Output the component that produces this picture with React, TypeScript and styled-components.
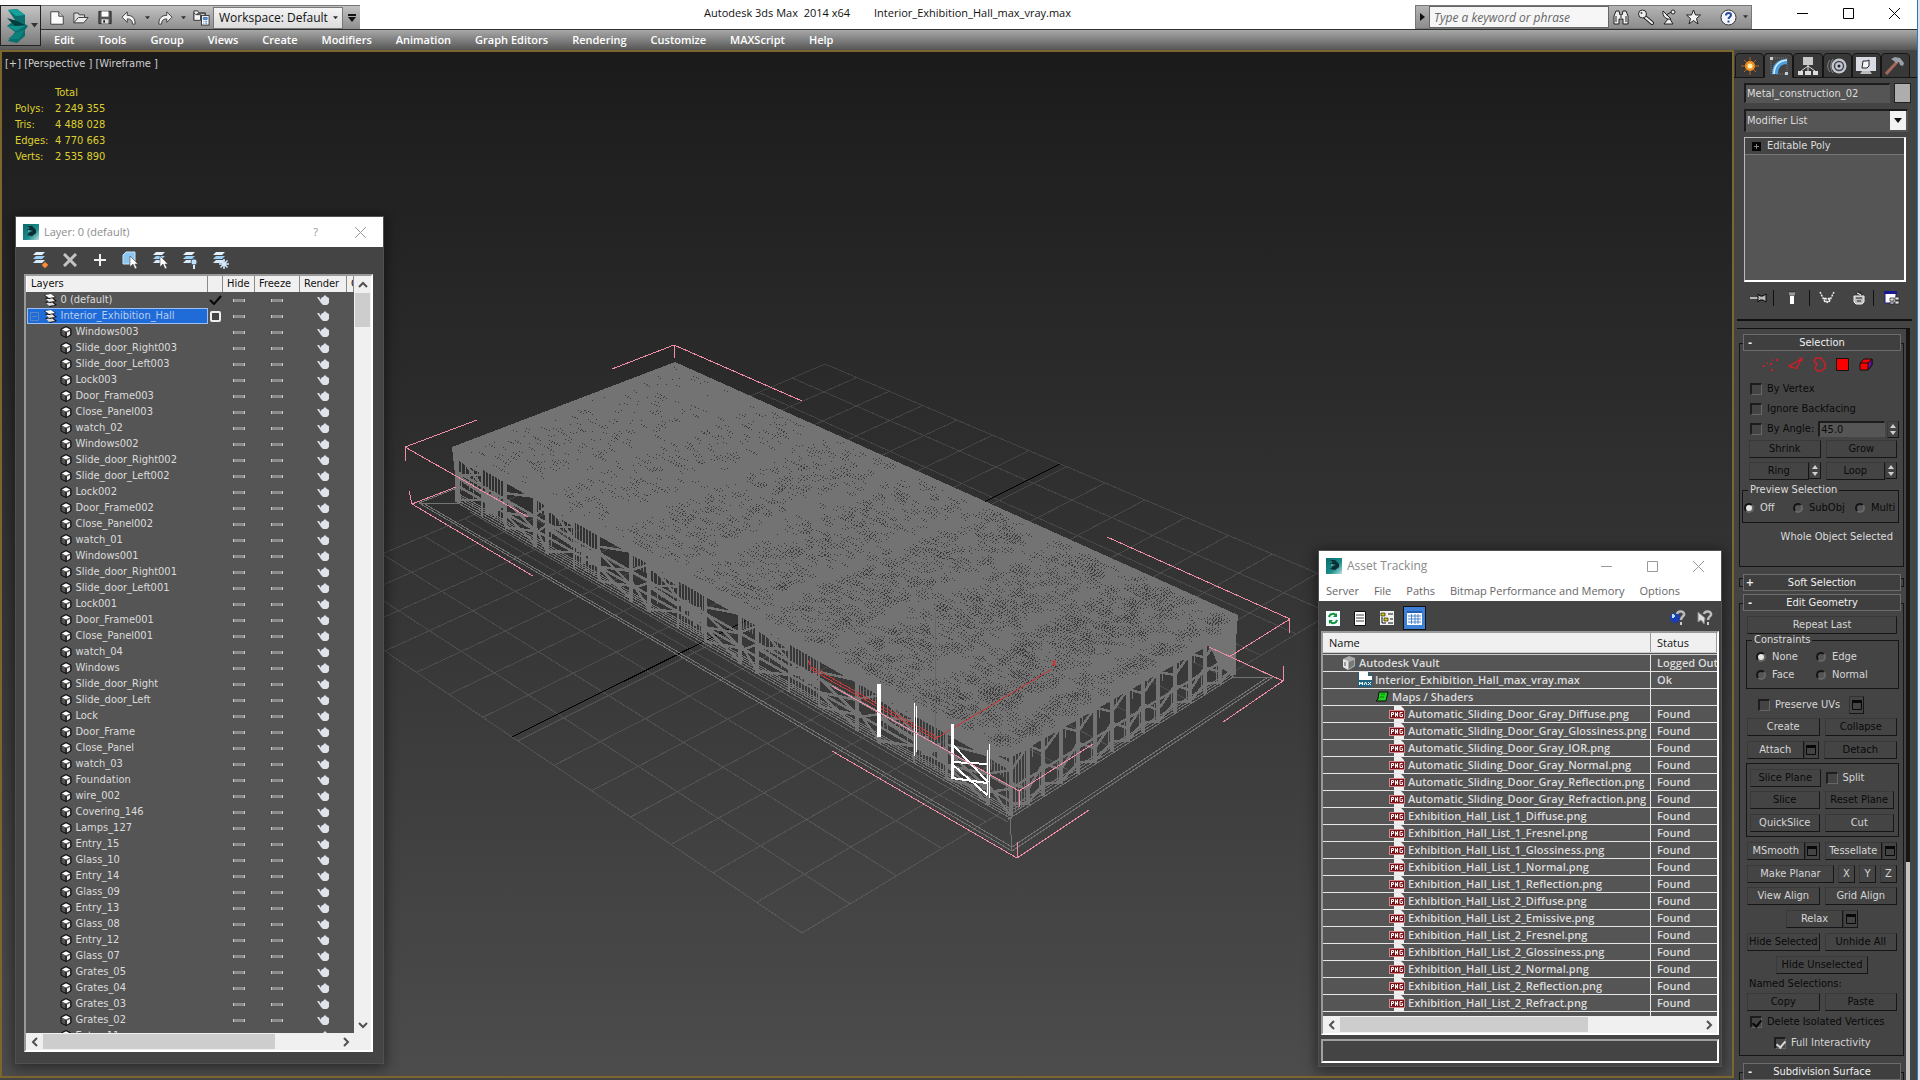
import React from "react";
import styled, { createGlobalStyle, css } from "styled-components";

const TAHOMA = `"DejaVu Sans Condensed", Roboto, "DejaVu Sans", sans-serif`;
const SEGOE = `"Open Sans", "Noto Sans", sans-serif`;

const Global = createGlobalStyle`
  * { box-sizing: border-box; }
  html, body, #root { height: 100%; }
  body { margin: 0; overflow: hidden; background: #444; font: 11px/14px ${TAHOMA}; color: #dcdcdc; }
  button, input, select { font: inherit; color: inherit; margin: 0; padding: 0; }
  button { border: 0; background: none; cursor: default; }
  svg { display: block; flex: none; }
`;

/* ---------- application frame ---------- */

const Frame = styled.div`
  display: flex;
  flex-direction: column;
  height: 100vh;
  border-right: 2px solid #dfe5ea;
  overflow: hidden;
`;
const Inner = styled.div`
  display: flex;
  flex-direction: column;
  flex: 1;
  min-height: 0;
  border-right: 1px solid #2f78b7;
`;
const Top = styled.header`
  display: flex;
  position: relative;
  background: #fff;
  height: 50px;
`;
const AppButton = styled.button`
  position: absolute;
  left: 0;
  top: 5px;
  width: 41px;
  height: 41px;
  display: flex;
  align-items: center;
  gap: 3px;
  padding-left: 4px;
  border: 1px solid #222;
  background: linear-gradient(#c4c4c4, #7c7c7c);
  z-index: 1;
`;
const Bars = styled.div`
  flex: 1;
  display: flex;
  flex-direction: column;
`;
const TitleBar = styled.div`
  height: 29px;
  display: flex;
  justify-content: space-between;
  padding-left: 40px;
`;
const QuickBar = styled.div`
  display: flex;
  align-items: center;
  margin-top: 5px;
  height: 24px;
  padding-left: 5px;
  background: linear-gradient(#c2c2c2, #8e8e8e);
  border-top: 1px solid #777;
`;
const QuickButton = styled.button<{ $w?: number }>`
  width: ${(p) => p.$w ?? 24}px;
  height: 22px;
  display: flex;
  align-items: center;
  justify-content: center;
`;
const SelectWrap = styled.label`
  display: flex;
  align-items: center;
  position: relative;
`;
const WorkspaceSelect = styled.select`
  appearance: none;
  width: 130px;
  height: 22px;
  padding-left: 5px;
  border: 1px solid #777;
  border-radius: 0;
  background: linear-gradient(#f4f4f4, #dcdcdc);
  color: #111;
  font: 12px/18px ${SEGOE};
`;
const SelectArrow = styled.span<{ $right: number }>`
  position: absolute;
  right: ${(p) => p.$right}px;
  pointer-events: none;
`;
const TitleText = styled.div`
  display: flex;
  gap: 24px;
  color: #111;
  font: 11px/26px ${SEGOE};
  white-space: pre;
`;
const TitleRight = styled.div`
  display: flex;
`;
const SearchBar = styled.div`
  display: flex;
  align-items: center;
  margin-top: 5px;
  height: 24px;
  width: 337px;
  background: linear-gradient(#b4b4b4, #8c8c8c);
  border: 1px solid #777;
`;
const SearchInput = styled.input`
  flex: 1;
  min-width: 0;
  height: 22px;
  padding-left: 4px;
  border: 1px solid #666;
  background: #f6f6f6;
  font: italic 12px/18px ${SEGOE};
  &::placeholder { color: #666; opacity: 1; }
`;
const WinButtons = styled.div<{ $w: number; $gray?: boolean }>`
  display: flex;
  height: 26px;
  color: ${(p) => (p.$gray ? "#999" : "#000")};
  button { width: ${(p) => p.$w}px; display: flex; align-items: center; justify-content: center; }
`;
const MenuBar = styled.nav`
  height: 21px;
  display: flex;
  align-items: center;
  gap: 24px;
  padding-left: 54px;
  border-top: 1px solid #2c322c;
  background: linear-gradient(#a8a8a8, #565656);
  button { font: 600 11px/16px ${SEGOE}; color: #fff; white-space: nowrap; }
`;
const Workspace = styled.div`
  flex: 1;
  display: flex;
  min-height: 0;
  background: #444;
`;

/* ---------- viewport ---------- */

const Viewport = styled.main`
  flex: 1;
  min-width: 0;
  position: relative;
  margin-bottom: 2px;
  border: 2px solid #7c6630;
  background: linear-gradient(#1b1b1b, #4c4c4c);
  overflow: hidden;
`;
const Scene = styled.svg`
  position: absolute;
  inset: 0;
  width: 100%;
  height: 100%;
`;
const ViewLabels = styled.div`
  position: relative;
  padding: 5px 3px 4px;
  white-space: pre;
  color: #cfcfcf;
`;
const Stats = styled.table`
  position: relative;
  margin: 10px 0 0 13px;
  border-collapse: collapse;
  color: #ddd02e;
  th, td { padding: 0; height: 16px; text-align: left; font-weight: normal; }
  th:first-child { width: 40px; }
`;

/* ---------- dialogs ---------- */

const Dialog = styled.section<{ $x: number; $y: number; $w: number; $h: number }>`
  position: absolute;
  left: ${(p) => p.$x}px;
  top: ${(p) => p.$y}px;
  width: ${(p) => p.$w}px;
  height: ${(p) => p.$h}px;
  display: flex;
  flex-direction: column;
  background: #444;
  border: 1px solid #505050;
  box-shadow: 0 2px 12px 2px rgba(0, 0, 0, 0.45);
`;
const DialogTitle = styled.div<{ $size: number }>`
  display: flex;
  align-items: center;
  height: 30px;
  flex: none;
  padding-left: 7px;
  gap: 5px;
  background: #fff;
  color: #8c8c8c;
  font: ${(p) => p.$size}px/18px ${SEGOE};
  > span { flex: 1; }
`;
const DialogMenu = styled.nav`
  display: flex;
  flex: none;
  gap: 15px;
  height: 20px;
  padding-left: 7px;
  background: #fff;
  color: #666;
  font: 11px/18px ${SEGOE};
  button { white-space: nowrap; }
`;
const LayerTools = styled.div`
  display: flex;
  align-items: center;
  height: 26px;
  flex: none;
  padding-left: 9px;
  button { width: 30px; display: flex; justify-content: center; }
`;
const Sunken = styled.div`
  display: flex;
  flex-direction: column;
  flex: 1;
  min-height: 0;
  border: 2px solid #999;
  border-right-color: #fff;
  border-bottom-color: #fff;
  background: #555;
`;
const LayerList = styled(Sunken)`
  margin: 1px 10px 11px 8px;
`;
const ListBody = styled.div`
  flex: 1;
  min-height: 0;
  display: flex;
`;
const Clip = styled.div`
  flex: 1;
  min-width: 0;
  overflow: hidden;
`;
const LayerTable = styled.table`
  width: 100%;
  table-layout: fixed;
  border-collapse: collapse;
  th {
    height: 16px;
    padding: 0 0 0 4px;
    border-right: 1px solid #888;
    border-left: 1px solid #fff;
    background: #f0f0f0;
    color: #111;
    font-weight: normal;
    text-align: left;
    overflow: hidden;
    white-space: nowrap;
  }
  td { height: 16px; padding: 0; line-height: 14px; }
  td > svg { margin: 0 auto; }
`;
const NameCell = styled.div<{ $level: number; $on?: boolean }>`
  display: flex;
  align-items: center;
  gap: 4px;
  height: 16px;
  padding-left: ${(p) => (p.$level ? 33 : 17)}px;
  white-space: nowrap;
  ${(p) =>
    p.$on &&
    css`
      padding-left: 2px;
      border: 1px solid #9cc0f4;
      background: #1f6bd8;
      color: #b8cdf0;
      svg:first-child { margin-right: 1px; }
    `}
`;
const ScrollColumn = styled.div`
  width: 17px;
  display: flex;
  flex-direction: column;
  background: #f0f0f0;
`;
const ScrollRow = styled.div`
  height: 17px;
  flex: none;
  display: flex;
  background: #f0f0f0;
`;
const ScrollArrow = styled.button`
  width: 17px;
  height: 17px;
  flex: none;
  display: flex;
  align-items: center;
  justify-content: center;
`;
const Track = styled.div`
  flex: 1;
  display: flex;
`;
const ThumbV = styled.div<{ $h: number }>`
  width: 15px;
  margin: 0 1px;
  height: ${(p) => p.$h}px;
  background: #cdcdcd;
`;
const ThumbH = styled.div<{ $pct: number }>`
  width: ${(p) => p.$pct}%;
  margin: 1px 0;
  background: #cdcdcd;
`;
const AssetTools = styled.div`
  display: flex;
  align-items: center;
  height: 30px;
  padding: 4px 3px 0 0;
  flex: none;
`;
const AssetTool = styled.button<{ $on?: boolean }>`
  width: 27px;
  height: 24px;
  display: flex;
  align-items: center;
  justify-content: center;
  ${(p) =>
    p.$on &&
    css`
      width: 23px;
      margin-left: 3px;
      border: 1px solid #111;
      background: #3e7fd8;
    `}
`;
const Spacer = styled.div`
  flex: 1;
`;
const AssetList = styled(Sunken)`
  margin: 0 2px 4px;
`;
const AssetTable = styled.table`
  width: 100%;
  height: 100%;
  table-layout: fixed;
  border-collapse: collapse;
  font: 600 11px/15px ${SEGOE};
  th {
    height: 20px;
    padding: 0 6px;
    background: #f0f0f0;
    color: #111;
    text-align: left;
    font-weight: normal;
    border-bottom: 3px double #ccc;
    border-right: 1px solid #999;
  }
  td {
    height: 17px;
    padding: 0;
    border-bottom: 1px solid #e6e6e6;
    overflow: hidden;
    white-space: nowrap;
  }
  td + td { border-left: 1px solid #e6e6e6; padding-left: 6px; }
  tr:last-child td { border-bottom: 0; height: auto; }
`;
const AssetName = styled.div<{ $pad: number }>`
  display: flex;
  align-items: center;
  gap: 3px;
  height: 16px;
  padding-left: ${(p) => p.$pad}px;
`;
const StatusBox = styled.div`
  flex: none;
  height: 24px;
  margin: 0 2px 3px;
  border: 2px solid #a0a0a0;
  border-right-color: #fff;
  border-bottom-color: #fff;
`;

/* ---------- command panel ---------- */

const Panel = styled.aside`
  width: 183px;
  flex: none;
  display: flex;
  flex-direction: column;
  padding-top: 3px;
  background: #444;
`;
const Tabs = styled.div`
  display: flex;
  flex: none;
  height: 25px;
  padding: 0 7px 0 1px;
  border-bottom: 1px solid #111;
`;
const Tab = styled.button<{ $on?: boolean }>`
  flex: 1;
  height: 25px;
  display: flex;
  align-items: center;
  justify-content: center;
  border: 1px solid #151515;
  border-radius: 4px 4px 0 0;
  background: ${(p) => (p.$on ? "#444" : "#383838")};
  border-bottom-color: ${(p) => (p.$on ? "#444" : "#151515")};
`;
const Controls = styled.div`
  flex: none;
  display: flex;
  flex-direction: column;
  padding: 5px 6px 0 10px;
`;
const NameRow = styled.div`
  display: flex;
  gap: 4px;
  height: 20px;
`;
const sunkenField = css`
  border: 2px solid #1c1c1c;
  border-right: 1px solid #555;
  border-bottom: 1px solid #555;
  border-radius: 0;
  background: #555;
  color: #dcdcdc;
`;
const NameInput = styled.input`
  ${sunkenField}
  flex: 1;
  min-width: 0;
  padding-left: 1px;
`;
const Swatch = styled.button`
  width: 17px;
  background: #adadad;
  border: 1px solid #222;
`;
const ModifierWrap = styled(SelectWrap)`
  margin: 6px 3px 5px 0;
`;
const ModifierSelect = styled.select`
  ${sunkenField}
  appearance: none;
  width: 100%;
  height: 23px;
  padding-left: 1px;
`;
const DropBox = styled(SelectArrow)`
  width: 16px;
  height: 19px;
  display: flex;
  align-items: center;
  justify-content: center;
  background: #f2f2f2;
`;
const Stack = styled.div`
  height: 145px;
  margin-right: 5px;
  border: 1px solid #bbb;
  border-right: 2px solid #fff;
  border-bottom: 2px solid #fff;
  background: #555;
`;
const StackItem = styled.div`
  display: flex;
  align-items: center;
  gap: 6px;
  height: 17px;
  padding-left: 7px;
  background: #444;
  border-bottom: 1px solid #777;
`;
const StackTools = styled.div`
  display: grid;
  grid-template-columns: 29px 1px 35px 1px 34px 29px 1px 36px;
  align-items: center;
  justify-items: center;
  height: 31px;
  i { width: 1px; height: 16px; background: #111; }
`;
const Rule = styled.hr`
  flex: none;
  margin: 6px 5px 7px 3px;
  width: auto;
  border: 0;
  height: 2px;
  background: #111;
`;
const RollArea = styled.div`
  flex: 1;
  min-height: 0;
  display: flex;
  gap: 2px;
  margin: 0 7px 0 3px;
  padding-left: 2px;
  border-top: 1px solid #111;
  overflow: hidden;
`;
const Rolls = styled.div`
  flex: 1;
  min-width: 0;
  padding-top: 5px;
`;
const Rail = styled.div`
  width: 4px;
  background: linear-gradient(#151515 0 533px, #c4c4c4 533px);
`;
const RollHead = styled.button`
  position: relative;
  display: grid;
  grid-template-columns: 12px 1fr 12px;
  width: calc(100% - 7px);
  height: 17px;
  margin-left: 4px;
  align-items: center;
  border: 1px solid #6c6c6c;
  background: #3f3f3f;
  color: #f0f0f0;
`;
const RollBody = styled.div<{ $h?: number }>`
  display: flex;
  flex-direction: column;
  margin: -8px 0 7px;
  padding: 12px 6px 5px 7px;
  border: 1px solid #151515;
  height: ${(p) => (p.$h ? p.$h + "px" : "auto")};
`;
const RollStub = styled.div`
  height: 9px;
  margin: -13px 0 7px;
  border: 1px solid #151515;
`;
const Line = styled.div<{ $gap?: number; $top?: number; $h?: number; $left?: number; $center?: boolean }>`
  display: flex;
  flex: none;
  align-items: center;
  height: ${(p) => p.$h ?? 18}px;
  gap: ${(p) => p.$gap ?? 5}px;
  margin-top: ${(p) => p.$top ?? 5}px;
  padding-left: ${(p) => p.$left ?? 0}px;
  justify-content: ${(p) => (p.$center ? "center" : "flex-start")};
`;
const Btn = styled.button<{ $w?: number }>`
  flex: ${(p) => (p.$w ? `0 0 ${p.$w}px` : "1 1 0")};
  min-width: 0;
  height: 18px;
  line-height: 14px;
  white-space: nowrap;
  text-align: center;
  border: 1px solid #393939;
  border-right-color: #161616;
  border-bottom-color: #161616;
  background: #444;
  color: #d6d6d6;
  &:disabled { color: #0a0a0a; }
`;
const Pair = styled.div<{ $w?: number }>`
  display: flex;
  flex: ${(p) => (p.$w ? `0 0 ${p.$w}px` : "1 1 0")};
  min-width: 0;
`;
const Square = styled.button`
  flex: 0 0 15px;
  height: 18px;
  display: flex;
  align-items: center;
  justify-content: center;
  border: 1px solid #333;
  border-right-color: #161616;
  border-bottom-color: #161616;
`;
const Check = styled.label<{ $off?: boolean }>`
  display: flex;
  align-items: center;
  gap: 5px;
  white-space: nowrap;
  color: ${(p) => (p.$off ? "#0a0a0a" : "#d6d6d6")};
  input {
    appearance: none;
    display: grid;
    place-items: center;
    width: 12px;
    height: 12px;
    border: 2px solid #1d1d1d;
    border-right: 1px solid #666;
    border-bottom: 1px solid #666;
  }
  input:checked::after {
    content: "";
    width: 4px;
    height: 7px;
    border: solid currentColor;
    border-width: 0 2px 2px 0;
    transform: rotate(40deg);
  }
`;
const Radio = styled.label<{ $off?: boolean }>`
  display: flex;
  align-items: center;
  gap: 6px;
  white-space: nowrap;
  color: ${(p) => (p.$off ? "#0a0a0a" : "#d6d6d6")};
  input {
    appearance: none;
    width: 10px;
    height: 10px;
    border-radius: 50%;
    border: 2px solid;
    border-color: #151515 #666 #666 #151515;
    background: #555;
  }
  input:checked { background: #e6e6e6; }
`;
const AngleInput = styled.input`
  ${sunkenField}
  width: 67px;
  height: 16px;
  padding-left: 1px;
  color: #0a0a0a;
`;
const Spin = styled.button`
  flex: 0 0 12px;
  height: 17px;
  display: flex;
  align-items: center;
  justify-content: center;
  border: 1px solid #393939;
  border-right-color: #161616;
  border-bottom-color: #161616;
`;
const Group = styled.fieldset<{ $h: number }>`
  flex: none;
  min-width: 0;
  height: ${(p) => p.$h}px;
  margin: 4px -2px 0 -5px;
  padding: 3px 0 0 1px;
  border: 1px solid #151515;
  legend { padding: 0 2px; margin-left: 4px; line-height: 12px; }
`;
const Constraints = styled(Group)`
  margin: 0 -2px 0 -1px;
  display: grid;
  grid-template-columns: 60px 1fr;
  grid-auto-rows: 18px;
  padding-top: 2px;
  padding-left: 9px;
  legend { margin-left: -4px; }
`;
const Previews = styled.div`
  display: grid;
  grid-template-columns: 49px 62px 1fr;
  height: 18px;
`;
const Box = styled.div`
  flex: none;
  margin: 4px -2px 0 -1px;
  padding: 0 4px 4px 3px;
  border: 1px solid #151515;
`;
const Note = styled.p`
  margin: 7px 0 0;
  padding-right: 4px;
  text-align: right;
`;
const Dim = styled.span`
  color: #0a0a0a;
`;

/* ---------- icons ---------- */

const Chevron = ({ d }: { d: "up" | "down" | "left" | "right" }) => {
  const p = { up: "M1 7l4-4 4 4", down: "M1 3l4 4 4-4", left: "M7 1L3 5l4 4", right: "M3 1l4 4-4 4" }[d];
  return (
    <svg width="10" height="10" viewBox="0 0 10 10">
      <path d={p} fill="none" stroke="#505050" strokeWidth="2" />
    </svg>
  );
};
const Tri = ({ s = 6, c = "#111" }: { s?: number; c?: string }) => (
  <svg width={s} height={s / 2 + 1} viewBox="0 0 8 5"><path d="M0 0h8L4 5z" fill={c} /></svg>
);
const MaxLogo = () => (
  <svg width="23" height="34" viewBox="0 0 23 34">
    <path d="M3 1l9-1 8 6v9l3 2-3 4v6l-8 7-9-2 7-9-8-6 8-6z" fill="#0b6f6e" />
    <path d="M3 1l9-1 8 6-9 1z" fill="#17a09b" />
    <path d="M2 9l10 3 8 4-10 1z" fill="#043d3f" />
    <path d="M2 17l8 0 10 0-9 5z" fill="#12918c" />
    <path d="M3 30l9-7 8-2-6 9z" fill="#0d7f7c" />
  </svg>
);
const SmallLogo = () => (
  <svg width="16" height="16" viewBox="0 0 16 16">
    <defs><linearGradient id="lg" x1="0" y1="0" x2="1" y2="1"><stop offset="0" stopColor="#0b6a6c" /><stop offset=".6" stopColor="#1d8d8c" /><stop offset="1" stopColor="#bfe3e2" /></linearGradient></defs>
    <rect width="16" height="16" fill="url(#lg)" />
    <path d="M4 2l5 0 4 4v3l-4 3-5-1 3-3-3-2 3-2z" fill="#0a2c33" />
    <path d="M5 6l5 1-5 1z" fill="#4fc0b8" />
  </svg>
);
const Doc = () => (
  <svg width="16" height="16" viewBox="0 0 18 16"><path d="M2 1h9l5 5v9H2z" fill="#fafafa" stroke="#333" /><path d="M11 1v5h5" fill="#ccc" stroke="#333" /></svg>
);
const Folder = () => (
  <svg width="16" height="15" viewBox="0 0 18 16"><path d="M1 14V3h5l1 2h6v3" fill="#ddd" stroke="#333" /><path d="M1 14l5-6h11l-5 6z" fill="#eee" stroke="#333" /></svg>
);
const Save = () => (
  <svg width="14" height="15" viewBox="0 0 16 16"><path d="M1 1h14v14H1z" fill="#555" stroke="#222" /><path d="M4 1h8v6H4z" fill="#fff" /><path d="M4 10h8v5H4z" fill="#ddd" /><path d="M6 11h2v3H6z" fill="#222" /></svg>
);
const Undo = ({ flip }: { flip?: boolean }) => (
  <svg width="16" height="14" viewBox="0 0 18 16"><path transform={flip ? "matrix(-1 0 0 1 18 0)" : undefined} d="M1 7l6-6v4c6 0 9 3 9 10h-3c0-4-2-6-6-6v4z" fill="#f3f3f3" stroke="#333" /></svg>
);
const Project = () => (
  <svg width="17" height="17" viewBox="0 0 18 18"><path d="M1 12V2h4l1 2h7v3M4 5h9v4" fill="#eee" stroke="#333" /><path d="M1 4v8h7V6H3z" fill="#f5f5f5" stroke="#333" /><rect x="9" y="7" width="8" height="10" fill="#fff" stroke="#333" /><path d="M11 9h4v2h-4zM11 13h1M13 13h2M11 15h1M13 15h2" stroke="#2d6cb5" fill="#6ea8e6" /></svg>
);
const Binoculars = () => (
  <svg width="16" height="16" viewBox="0 0 16 16"><path d="M1 15V7l2-5h3l1 4h2l1-4h3l2 5v8h-5v-5H6v5z" fill="#eee" stroke="#222" /><path d="M3 7v6M13 7v6M7 8h2" stroke="#222" /></svg>
);
const Key = () => (
  <svg width="17" height="16" viewBox="0 0 17 16"><path d="M8 8l7 6" stroke="#222" strokeWidth="4" strokeLinecap="round" /><path d="M8 8l7 6" stroke="#eee" strokeWidth="2" strokeLinecap="round" /><circle cx="5.500" cy="5" r="4" fill="#eee" stroke="#222" /><circle cx="4.500" cy="4" r="1" fill="#444" /></svg>
);
const Dish = () => (
  <svg width="16" height="16" viewBox="0 0 16 16"><path d="M2 2c-1 5 3 9 8 8zM7 10l-4 5h9l-3-5" fill="#eee" stroke="#222" /><path d="M5 6l7-4" stroke="#222" /><circle cx="12" cy="3" r="2" fill="#eee" stroke="#222" /></svg>
);
const Star = () => (
  <svg width="17" height="16" viewBox="0 0 17 16"><path d="M8.500 1l2 5h5l-4 3.500 1.500 5.500-4.500-3.500L4 15l1.500-5.500-4-3.500h5z" fill="#f4f4f4" stroke="#222" /></svg>
);
const Help = () => (
  <svg width="17" height="17" viewBox="0 0 17 17"><circle cx="8.500" cy="8.500" r="7.500" fill="#f4f6fb" stroke="#333" /><path d="M6 6.500c0-3.500 5-3 5-.5 0 2-2.500 2-2.500 4" fill="none" stroke="#234a9c" strokeWidth="2" /><path d="M7.500 11.500h2v2h-2z" fill="#234a9c" /></svg>
);
const Min = () => <svg width="11" height="11" viewBox="0 0 11 11"><path d="M0 5.500h11" stroke="currentColor" /></svg>;
const Max = () => <svg width="11" height="11" viewBox="0 0 11 11"><path d="M.5.5h10v10H.5z" fill="none" stroke="currentColor" /></svg>;
const Close = () => <svg width="11" height="11" viewBox="0 0 11 11"><path d="M0 0l11 11M11 0L0 11" stroke="currentColor" /></svg>;

const Layers = () => (
  <svg width="13" height="13" viewBox="0 0 13 13">
    <path d="M1 8l7-1 5 4-7 2z" fill="#0a0a0a" /><path d="M2 9l6-1 3 3-6 1z" fill="#d8d8d8" />
    <path d="M1 4l7-1 5 4-7 2z" fill="#0a0a0a" /><path d="M2 5l6-1 3 3-6 1z" fill="#e8e8e8" />
    <path d="M0 1l7-1 5 3-7 2z" fill="#0a0a0a" /><path d="M1 1l6-1 4 3-6 1z" fill="#fff" />
  </svg>
);
const LayerTool = ({ k }: { k: "new" | "box" | "pick" | "light" | "freeze" }) => (
  <svg width="18" height="18" viewBox="0 0 18 18">
    {k === "box" ? (
      <path d="M2 4l3-3h9v9l-2 3H2z" fill="#8cc6f0" stroke="#c8e6fc" />
    ) : (
      <g fill="#9ccdf3"><path d="M5 1h9l-3 3H2z" fill="#e2f2ff" /><path d="M5 5h9l-3 3H2z" /><path d="M5 9h9l-3 3H2z" fill="#d5eafc" /></g>
    )}
    {k === "new" && <g><circle cx="14" cy="14" r="2.500" fill="#f06a1d" /><path d="M14 11v6M11 14h6" stroke="#f9a24c" /></g>}
    {(k === "box" || k === "pick") && <path d="M9 5v11l3-3 2 5 2-1-2-4h3z" fill="#fff" stroke="#444" strokeWidth=".6" />}
    {k === "light" && <g><circle cx="13" cy="11" r="3" fill="#bfe0fa" stroke="#567" /><path d="M12 14h2v4h-2z" fill="#d8e8f8" /></g>}
    {k === "freeze" && <path d="M13 8v10M8 13h10M9.500 9.500l7 7M16.500 9.500l-7 7" stroke="#d2eaff" strokeWidth="1.500" />}
  </svg>
);
const Cube = () => (
  <svg width="12" height="12" viewBox="0 0 12 12"><path d="M6 .5l5 2.500v6l-5 2.500-5-2.500V3z" fill="#555" stroke="#0a0a0a" /><path d="M2 3.500L6 1.500l4 2-4 2z" fill="#fff" /><path d="M7 6.500l3-1.500v3.500L7 10.500z" fill="#eee" /><path d="M6 6v5" stroke="#0a0a0a" /></svg>
);
const Dash = () => <svg width="12" height="4" viewBox="0 0 12 4"><path d="M0 1h12v3H0z" fill="#8c8c8c" /><path d="M0 1h1v3H0zM11 1h1v3h-1z" fill="#ccc" /></svg>;
const Teapot = () => <svg width="13" height="10" viewBox="0 0 13 10"><path d="M0 2h2l2 3V3l2-1 2-2 2 2 2 1v5l-2 2H6L4 8 2 5z" fill="#dfe2ea" /></svg>;
const Tick = () => <svg width="13" height="10" viewBox="0 0 13 10"><path d="M1 5l4 4 7-8" fill="none" stroke="#080808" strokeWidth="2" /></svg>;
const EmptyBox = () => <svg width="11" height="11" viewBox="0 0 11 11"><rect x="1" y="1" width="9" height="9" rx="1" fill="#444" stroke="#eee" strokeWidth="2" /></svg>;
const Minus = () => <svg width="9" height="9" viewBox="0 0 9 9"><path d="M.5.5h8v8h-8zM2 4.500h5" fill="none" stroke="#5a86c4" /></svg>;
const WindowGlyph = () => <svg width="10" height="10" viewBox="0 0 10 10"><path d="M.5 1v8.500h9V1" fill="none" stroke="#080808" /><path d="M0 0h10v3H0z" fill="#080808" /></svg>;
const SpinArrows = () => <svg width="6" height="11" viewBox="0 0 6 11"><path d="M0 4h6L3 0zM0 7h6l-3 4z" fill="#d0d0d0" /></svg>;
const Png = () => (
  <svg width="16" height="16" viewBox="0 0 16 16"><path d="M5 0h7l3 3v13H5z" fill="#eee" /><rect x=".5" y="4.500" width="15" height="8" fill="#7b1016" stroke="#d28a8e" /><path d="M2.500 11V6.500h2v2h-2M6.500 11V6.500l2 4V6M13.500 6.500h-2.500v4h2.500v-2h-1" fill="none" stroke="#fff" /></svg>
);
const MaxFile = () => <svg width="14" height="15" viewBox="0 0 14 15"><path d="M0 0h10l4 4v11H0z" fill="#1e6480" /><path d="M1 0h9v4h4v4H1z" fill="#fff" /><path d="M1.500 13V10l1.500 2 1.500-2v3M6 13l1.500-3L9 13M10 10l3 3M13 10l-3 3" stroke="#fff" fill="none" /></svg>;
const Vault = () => <svg width="13" height="14" viewBox="0 0 13 14"><path d="M0 3l6-3 6 2v8l-6 4-6-3z" fill="#aaa" /><path d="M0 3l5 2v9l-5-3z" fill="#e4e4e4" /><path d="M6 6l5-2v5l-5 4z" fill="#777" /><path d="M2 6v4" stroke="#555" /></svg>;
const Maps = () => <svg width="13" height="12" viewBox="0 0 13 12"><path d="M3 1h9l-2 9H0l2-2z" fill="#1fd020" stroke="#0a0a0a" /><path d="M5 3h4M4 6h4" stroke="#0d7a10" /></svg>;
const Refresh = () => <svg width="14" height="15" viewBox="0 0 14 15"><path d="M0 0h14v15H0z" fill="#f2fbff" /><path d="M3 6c1-4 6-4 7-1M11 9c-1 4-6 4-7 1" stroke="#12923a" strokeWidth="2" fill="none" /><path d="M11 2v4H7zM3 13V9h4z" fill="#12923a" /></svg>;
const TextDoc = () => <svg width="12" height="15" viewBox="0 0 12 15"><path d="M.5.500h11v14H.5z" fill="#fff" stroke="#111" /><path d="M2 4h8M2 7h8M2 10h8" stroke="#444" /></svg>;
const TreeDoc = () => <svg width="14" height="14" viewBox="0 0 14 14"><path d="M0 0h14v14H0z" fill="#f0f0f0" /><path d="M1 2h4v3H1zM4 7h4v3H4z" fill="#d0c000" stroke="#222" strokeWidth=".7" /><path d="M8 3h5M10 8h3M8 12h5M2 6v6h4" stroke="#111" fill="none" /></svg>;
const GridDoc = () => <svg width="15" height="14" viewBox="0 0 15 14"><path d="M0 0h15v14H0z" fill="#fff" /><path d="M0 0h15v2H0z" fill="#225fb0" /><path d="M1 5h13M1 8h13M1 11h13M4.500 3v10M8 3v10M11 3v10" stroke="#4d86cf" /></svg>;
const Query = ({ globe }: { globe?: boolean }) => (
  <svg width="18" height="16" viewBox="0 0 18 16">
    {globe ? <g><circle cx="6" cy="8" r="5" fill="#1a3fb0" /><path d="M3 6h3M4 4v4" stroke="#bdf" strokeWidth="2" /></g> : <path d="M2 2v10l3-2 3 4 1-6z" fill="#ddd" stroke="#888" />}
    <path d="M8 4c1-4 8-3 7 1-1 2-3 2-3 5" fill="none" stroke="#bbb" strokeWidth="2.500" /><path d="M11 12h2v3h-2z" fill="#ccc" />
  </svg>
);

const TabCreate = () => <svg width="20" height="20" viewBox="0 0 20 20"><path d="M10 1v18M1 10h18M4 4l12 12M16 4L4 16" stroke="#b8641a" /><circle cx="10" cy="10" r="5" fill="#f09024" /><circle cx="10" cy="10" r="2.500" fill="#fff3b0" /></svg>;
const TabModify = () => <svg width="20" height="20" viewBox="0 0 20 20"><path d="M2 2h16v16H2z" fill="none" stroke="#777" strokeDasharray="1 1" /><path d="M3 18C3 9 8 3 18 3v5c-6 0-9 4-9 10z" fill="#4aa0e0" /><path d="M5 18C5 10 9 5 18 4" fill="none" stroke="#d6efff" strokeWidth="1.500" /><path d="M1 1h3v3H1zM16 16h3v3h-3z" fill="#ccc" /></svg>;
const TabHierarchy = () => <svg width="20" height="20" viewBox="0 0 20 20"><path d="M5 1h10v8H5z" fill="#c8c8c8" /><path d="M10 9v6M10 10l-7 5M10 10l7 5" stroke="#ddd" /><path d="M0 15h5v4H0zM7 15h6v4H7zM15 15h5v4h-5z" fill="#ddd" /></svg>;
const TabMotion = () => <svg width="22" height="20" viewBox="0 0 22 20"><path d="M4 4c-3 3-3 9 0 12M7 3c-3 4-3 10 0 14" stroke="#888" fill="none" /><circle cx="13" cy="10" r="7.500" fill="#c4c8cc" /><circle cx="13" cy="10" r="4.500" fill="none" stroke="#445" strokeWidth="1.500" /><circle cx="13" cy="10" r="1.500" fill="#223" /></svg>;
const TabDisplay = () => <svg width="20" height="20" viewBox="0 0 20 20"><path d="M0 1h20v14H0z" fill="#d8dce2" /><path d="M6 15h8l2 3H4z" fill="#bbb" /><path d="M7 5h4l2-1v6l-2 2H6z" fill="#f4f4f4" stroke="#222" /></svg>;
const TabUtils = () => <svg width="20" height="20" viewBox="0 0 20 20"><path d="M12 6L1 18" stroke="#a3685c" strokeWidth="3" /><path d="M6 3l4-2 5 1 4 5-1 3-3-1-1-3-3 1-2-2z" fill="#9aa0a6" /></svg>;

/* ---------- scene drawing ---------- */

type Pt = [number, number];

/* Projective mapping of the unit square onto the ground plane's four corners. */
const W: Pt = [296, 591], N: Pt = [825, 364], E: Pt = [1364, 593], S: Pt = [802, 933];
const ground = (() => {
  const dx1 = N[0] - E[0], dx2 = S[0] - E[0], dx3 = W[0] - N[0] + E[0] - S[0];
  const dy1 = N[1] - E[1], dy2 = S[1] - E[1], dy3 = W[1] - N[1] + E[1] - S[1];
  const den = dx1 * dy2 - dx2 * dy1;
  const g = (dx3 * dy2 - dx2 * dy3) / den, h = (dx1 * dy3 - dx3 * dy1) / den;
  return (u: number, v: number): Pt => {
    const w = g * u + h * v + 1;
    return [
      ((N[0] - W[0] + g * N[0]) * u + (S[0] - W[0] + h * S[0]) * v + W[0]) / w,
      ((N[1] - W[1] + g * N[1]) * u + (S[1] - W[1] + h * S[1]) * v + W[1]) / w,
    ];
  };
})();
const seg = (a: Pt, b: Pt) => `M${a[0].toFixed(1)} ${a[1].toFixed(1)}L${b[0].toFixed(1)} ${b[1].toFixed(1)}`;

const gridPath = Array.from({ length: 15 }, (_, i) => i / 14)
  .map((k) => seg(ground(0, k), ground(1, k)) + seg(ground(k, 0), ground(k, 1)))
  .join("");

let seed = 7;
const rnd = () => {
  seed = (seed * 16807) % 2147483647;
  return seed / 2147483647;
};

const roof = (u: number, v: number): Pt => {
  const A: Pt = [675, 362], B: Pt = [1237, 618], C: Pt = [1006, 752], D: Pt = [452, 447];
  return [0, 1].map((i) => (1 - u) * ((1 - v) * A[i] + v * D[i]) + u * ((1 - v) * B[i] + v * C[i])) as Pt;
};
/* Clusters of single dark pixels, in bands that run across the roof and thicken towards the front. */
const dotPath = (() => {
  let out = "";
  for (let u = 0.015; u < 0.985; u += 0.0105) {
    const bay = (u * 7.5 + 0.1) % 1;
    for (let v = 0.03; v < 0.98; v += 0.022) {
      const uu = u + (rnd() - 0.5) * 0.008;
      const dense = 0.28 + uu * 0.5 + v * 0.15;
      if (bay < 0.25 && rnd() < 0.8) continue;
      if (rnd() > dense) continue;
      const [x, y] = roof(uu, v);
      const cols = 1 + Math.floor(rnd() * (2 + uu * 3));
      const rows = 1 + Math.floor(rnd() * (1.4 + uu * 3.2));
      for (let r = 0; r < rows; r++)
        for (let c = 0; c < cols; c++)
          out += `M${Math.round(x) + c * 3 + (r % 2) * 2} ${Math.round(y) + r * 2 + (c % 2)}h1v1h-1z`;
    }
  }
  return out;
})();

const leftAt = (x: number, t: number): Pt => {
  const top = 447 + ((x - 452) / 560) * 319;
  const bot = 503 + ((x - 458) / 552) * 315;
  return [x, top + (bot - top) * t];
};
const bays: [number, number][] = [[457, 535], [547, 631], [649, 740], [757, 857], [879, 988]];
const leftWall = (() => {
  let thick = "", mid = "", thin = "";
  const rail = (t: number) => seg(leftAt(457, t), leftAt(1012, t));
  thick += rail(0) + rail(0.06);
  mid += rail(0.42) + rail(0.68);
  thin += rail(0.82) + rail(0.86) + rail(0.9) + rail(0.95) + rail(1);
  bays.forEach(([a, b]) => {
    const w = b - a, m = a + w * 0.32, k = a + w * 0.62;
    [a, b].forEach((x) => (thick += seg(leftAt(x, 0), leftAt(x, 1))));
    mid += seg(leftAt(m, 0), leftAt(m, 1)) + seg(leftAt(k, 0), leftAt(k, 0.95));
    for (let x = m; x < k; x += 3) thin += seg(leftAt(x, 0), leftAt(x, 0.9));
    for (let x = m + 1; x < k; x += 4) thick += seg(leftAt(x, 0.35 + rnd() * 0.15), leftAt(x, 0.55 + rnd() * 0.35));
    mid += seg(leftAt(a, 0.05), leftAt(m, 0.42)) + seg(leftAt(k, 0.3), leftAt(b, 0.05)) + seg(leftAt(k, 0.42), leftAt(b, 0.68));
    mid += seg(leftAt(k, 0.68), leftAt(b, 0.42)) + seg(leftAt(a, 0.95), leftAt(m, 0.68)) + seg(leftAt(k, 0.95), leftAt(b, 0.7));
    mid += seg(leftAt(a, 0.5), leftAt(m, 0.2)) + seg(leftAt(k, 0.7), leftAt(b, 0.95));
    thick += seg(leftAt(a, 0.15), leftAt(m, 0.15)) + seg(leftAt(a, 0.5), leftAt(m, 0.55));
    for (let x = a + 4; x < m; x += 4) thin += seg(leftAt(x, 0), leftAt(x, 0.3 + rnd() * 0.5));
  });
  [[535, 547], [631, 649], [740, 757], [857, 879], [988, 1010]].forEach(([a, b]) => {
    mid += seg(leftAt(a, 0.4), leftAt(b, 0.1)) + seg(leftAt(a, 0.75), leftAt(b, 0.45)) + seg(leftAt(a, 0.6), leftAt(b, 0.95));
    for (let x = a; x < b; x += 3) thin += seg(leftAt(x, 0), leftAt(x, 0.3));
  });
  return { thick, mid, thin };
})();

const rightAt = (x: number, t: number): Pt => {
  const top = 750 - ((x - 1008) / 229) * 128;
  const bot = 818 - ((x - 1010) / 223) * 141;
  return [x, top + (bot - top) * t];
};
const rightWall = (() => {
  let thick = "", mid = "", thin = "";
  const rail = (t: number) => seg(rightAt(1008, t), rightAt(1234, t));
  thick += rail(0.02) + rail(0.1);
  mid += rail(0.58);
  thin += rail(0.86) + rail(0.9) + rail(0.95) + rail(1);
  const posts = [1011, 1028, 1043, 1061, 1078, 1095, 1112, 1128, 1143, 1158, 1175, 1190, 1205, 1220, 1234];
  posts.forEach((x, i) => {
    thick += seg(rightAt(x, 0), rightAt(x, 0.98));
    if (i === posts.length - 1) return;
    const n = posts[i + 1];
    mid += seg(rightAt(x, i % 2 ? 0.1 : 0.32), rightAt(n, i % 2 ? 0.32 : 0.1));
    mid += seg(rightAt(x, i % 2 ? 0.75 : 0.5), rightAt(n, i % 2 ? 0.5 : 0.75));
    mid += seg(rightAt(x, i % 2 ? 0.95 : 0.8), rightAt(n, i % 2 ? 0.8 : 0.95));
    thin += seg(rightAt(x + 4, 0), rightAt(x + 4, 0.3)) + seg(rightAt(n - 4, 0.6), rightAt(n - 4, 0.9));
  });
  for (let x = 1006; x < 1030; x += 3) thin += seg(rightAt(x, 0), rightAt(x, 0.95));
  return { thick, mid, thin };
})();

const SceneDrawing = () => (
  <Scene viewBox="2 52 1730 1024" preserveAspectRatio="xMidYMid meet" aria-label="Perspective wireframe">
    <g shapeRendering="crispEdges" fill="none">
      <path d={gridPath} stroke="#fff" strokeOpacity=".11" />
      <path d="M512 737L1060 464" stroke="#000" />
      <g stroke="#737373">
        <path d="M458 503H419L1012 851L1273 677H1233M1010 818L1012 851M423 503L1012 847L1268 677M419 503L457 488" />
        <path d="M470 512L1008 822M1220 652L1273 677" strokeOpacity=".6" />
        {[leftWall, rightWall].map((w, i) => (
          <g key={i}>
            <path d={w.thin} />
            <path d={w.mid} strokeWidth="2.500" />
            <path d={w.thick} strokeWidth="4" />
          </g>
        ))}
      </g>
      <path d="M675 362L1238 615L1233 677L1218 664L1208 642L1190 652L1008 758L985 752L452 450L452 447z" fill="#737373" />
      <path d="M452 447l6 56h3l-3-52z" fill="#737373" />
      <path d={dotPath} fill="#3a3a3a" />
      <path d="M935 740V612" stroke="#666" />
      <g stroke="#c23a3a">
        <path d="M808 660l4 10L935 739L1052 669M812 667L937 737M1052 660l4 6M1056 660l-4 6" />
      </g>
      <g stroke="#fff">
        <path d="M879 684v53" strokeWidth="4" />
        <path d="M914 703v53M916 706v46M989 744v54M987 750v45" />
        <path d="M952 724v55" strokeWidth="3" />
        <path d="M952 744l36 38M952 762l36 2M952 764l35 31M952 778l35 5" strokeWidth="2" />
      </g>
      <path
        stroke="#f08ca4"
        d="M612 369L674 345L802 401M674 345v13M477 420L405 447L528 517M405 447v14M409 491l3 13L456 487M412 504L533 576M832 686L1019 791L1093 744M1019 791v16M832 751L1017 858L1089 810M1017 858v-16M1107 537L1290 619L1229 657M1290 619l-1 14M1209 647L1283 681L1223 722M1283 681l1-15"
      />
    </g>
  </Scene>
);

/* ---------- data ---------- */

const menus = ["Edit", "Tools", "Group", "Views", "Create", "Modifiers", "Animation", "Graph Editors", "Rendering", "Customize", "MAXScript", "Help"];
const layerNames = [
  "Windows003", "Slide_door_Right003", "Slide_door_Left003", "Lock003", "Door_Frame003", "Close_Panel003", "watch_02",
  "Windows002", "Slide_door_Right002", "Slide_door_Left002", "Lock002", "Door_Frame002", "Close_Panel002", "watch_01",
  "Windows001", "Slide_door_Right001", "Slide_door_Left001", "Lock001", "Door_Frame001", "Close_Panel001", "watch_04",
  "Windows", "Slide_door_Right", "Slide_door_Left", "Lock", "Door_Frame", "Close_Panel", "watch_03", "Foundation",
  "wire_002", "Covering_146", "Lamps_127", "Entry_15", "Glass_10", "Entry_14", "Glass_09", "Entry_13", "Glass_08",
  "Entry_12", "Glass_07", "Grates_05", "Grates_04", "Grates_03", "Grates_02", "Entry_11",
];
const door = ["Diffuse", "Glossiness", "IOR", "Normal", "Reflection", "Refraction"].map((n) => `Automatic_Sliding_Door_Gray_${n}.png`);
const hall1 = ["Diffuse", "Fresnel", "Glossiness", "Normal", "Reflection"].map((n) => `Exhibition_Hall_List_1_${n}.png`);
const hall2 = ["Diffuse", "Emissive", "Fresnel", "Glossiness", "Normal", "Reflection", "Refract"].map((n) => `Exhibition_Hall_List_2_${n}.png`);
const stats = [["Polys:", "2 249 355"], ["Tris:", "4 488 028"], ["Edges:", "4 770 663"], ["Verts:", "2 535 890"]];

/* ---------- parts ---------- */

const States = () => (
  <>
    <td><Dash /></td>
    <td><Dash /></td>
    <td><Teapot /></td>
    <td />
  </>
);

const LayerDialog = () => (
  <Dialog $x={13} $y={164} $w={369} $h={848}>
    <DialogTitle $size={11}>
      <SmallLogo />
      <span>Layer: 0 (default)</span>
      <WinButtons $w={45} $gray>
        <button aria-label="Help">?</button>
        <button aria-label="Close"><Close /></button>
      </WinButtons>
    </DialogTitle>
    <LayerTools>
      <button aria-label="New layer"><LayerTool k="new" /></button>
      <button aria-label="Delete"><svg width="14" height="14" viewBox="0 0 14 14"><path d="M1 1l12 12M13 1L1 13" stroke="#c4c4c4" strokeWidth="3" /></svg></button>
      <button aria-label="Add"><svg width="12" height="12" viewBox="0 0 12 12"><path d="M6 0v12M0 6h12" stroke="#f0f0f0" strokeWidth="2" /></svg></button>
      <button aria-label="Select objects"><LayerTool k="box" /></button>
      <button aria-label="Select layer"><LayerTool k="pick" /></button>
      <button aria-label="Hide all"><LayerTool k="light" /></button>
      <button aria-label="Freeze all"><LayerTool k="freeze" /></button>
    </LayerTools>
    <LayerList>
      <ListBody>
        <Clip>
          <LayerTable>
            <colgroup>
              <col style={{ width: 181 }} /><col style={{ width: 15 }} /><col style={{ width: 32 }} />
              <col style={{ width: 45 }} /><col style={{ width: 47 }} /><col />
            </colgroup>
            <thead>
              <tr><th>Layers</th><th /><th>Hide</th><th>Freeze</th><th>Render</th><th>C</th></tr>
            </thead>
            <tbody>
              <tr><td><NameCell $level={0}><Layers />0 (default)</NameCell></td><td><Tick /></td><States /></tr>
              <tr><td><NameCell $level={0} $on><Minus /><Layers />Interior_Exhibition_Hall</NameCell></td><td><EmptyBox /></td><States /></tr>
              {layerNames.map((n) => (
                <tr key={n}><td><NameCell $level={1}><Cube />{n}</NameCell></td><td /><States /></tr>
              ))}
            </tbody>
          </LayerTable>
        </Clip>
        <ScrollColumn>
          <ScrollArrow aria-label="Scroll up"><Chevron d="up" /></ScrollArrow>
          <Track><ThumbV $h={34} /></Track>
          <ScrollArrow aria-label="Scroll down"><Chevron d="down" /></ScrollArrow>
        </ScrollColumn>
      </ListBody>
      <ScrollRow>
        <ScrollArrow aria-label="Scroll left"><Chevron d="left" /></ScrollArrow>
        <Track><ThumbH $pct={79} /></Track>
        <ScrollArrow aria-label="Scroll right"><Chevron d="right" /></ScrollArrow>
        <ScrollArrow as="span" />
      </ScrollRow>
    </LayerList>
  </Dialog>
);

const AssetDialog = () => (
  <Dialog $x={1316} $y={498} $w={404} $h={517}>
    <DialogTitle $size={12}>
      <SmallLogo />
      <span>Asset Tracking</span>
      <WinButtons $w={46} $gray>
        <button aria-label="Minimize"><Min /></button>
        <button aria-label="Maximize"><Max /></button>
        <button aria-label="Close"><Close /></button>
      </WinButtons>
    </DialogTitle>
    <DialogMenu>
      {["Server", "File", "Paths", "Bitmap Performance and Memory", "Options"].map((m) => <button key={m}>{m}</button>)}
    </DialogMenu>
    <AssetTools>
      <AssetTool aria-label="Refresh"><Refresh /></AssetTool>
      <AssetTool aria-label="Status log"><TextDoc /></AssetTool>
      <AssetTool aria-label="Tree view"><TreeDoc /></AssetTool>
      <AssetTool aria-label="Table view" $on><GridDoc /></AssetTool>
      <Spacer />
      <AssetTool aria-label="Web help"><Query globe /></AssetTool>
      <AssetTool aria-label="Help"><Query /></AssetTool>
    </AssetTools>
    <AssetList>
      <ListBody>
        <Clip>
          <AssetTable>
            <colgroup><col /><col style={{ width: 66 }} /></colgroup>
            <thead><tr><th>Name</th><th>Status</th></tr></thead>
            <tbody>
              <tr><td><AssetName $pad={20}><Vault />Autodesk Vault</AssetName></td><td>Logged Out</td></tr>
              <tr><td><AssetName $pad={35}><MaxFile />Interior_Exhibition_Hall_max_vray.max</AssetName></td><td>Ok</td></tr>
              <tr><td><AssetName $pad={53}><Maps />Maps / Shaders</AssetName></td><td /></tr>
              {[...door, ...hall1, ...hall2].map((n) => (
                <tr key={n}><td><AssetName $pad={66}><Png />{n}</AssetName></td><td>Found</td></tr>
              ))}
              <tr><td /><td /></tr>
            </tbody>
          </AssetTable>
        </Clip>
      </ListBody>
      <ScrollRow>
        <ScrollArrow aria-label="Scroll left"><Chevron d="left" /></ScrollArrow>
        <Track><ThumbH $pct={69} /></Track>
        <ScrollArrow aria-label="Scroll right"><Chevron d="right" /></ScrollArrow>
      </ScrollRow>
    </AssetList>
    <StatusBox />
  </Dialog>
);

const Rollout = ({ title, sign }: { title: string; sign: string }) => (
  <RollHead><b>{sign}</b><span>{title}</span></RollHead>
);

const CommandPanel = () => (
  <Panel>
    <Tabs>
      <Tab aria-label="Create"><TabCreate /></Tab>
      <Tab aria-label="Modify" $on><TabModify /></Tab>
      <Tab aria-label="Hierarchy"><TabHierarchy /></Tab>
      <Tab aria-label="Motion"><TabMotion /></Tab>
      <Tab aria-label="Display"><TabDisplay /></Tab>
      <Tab aria-label="Utilities"><TabUtils /></Tab>
    </Tabs>
    <Controls>
      <NameRow>
        <NameInput aria-label="Object name" defaultValue="Metal_construction_02" />
        <Swatch aria-label="Object color" />
      </NameRow>
      <ModifierWrap>
        <ModifierSelect aria-label="Modifier List"><option>Modifier List</option></ModifierSelect>
        <DropBox $right={2}><Tri s={8} /></DropBox>
      </ModifierWrap>
      <Stack>
        <StackItem>
          <svg width="9" height="9" viewBox="0 0 9 9"><path d="M0 0h9v9H0z" fill="#050505" /><path d="M2 4.500h5M4.500 2v5" stroke="#888" /></svg>
          Editable Poly
        </StackItem>
      </Stack>
      <StackTools>
        <svg width="17" height="12" viewBox="0 0 17 12"><path d="M0 6h8" stroke="#ddd" strokeWidth="1.500" /><path d="M8 2v8l2-2h3l3 2V2l-3 2h-3z" fill="#bbb" stroke="#050505" /></svg>
        <i />
        <svg width="8" height="14" viewBox="0 0 8 14"><path d="M0 1h8l-1 4H1z" fill="#999" stroke="#111" strokeWidth=".5" /><path d="M2 5h4v8H2z" fill="#fff" /></svg>
        <i />
        <svg width="16" height="14" viewBox="0 0 16 14"><path d="M1 1l5 10M15 1l-5 10M5 7l3 5 3-5-3 1z" stroke="#eee" strokeWidth="1.500" strokeDasharray="2 1" fill="none" /></svg>
        <svg width="12" height="14" viewBox="0 0 12 14"><path d="M1 5h10v6l-2 2H3l-2-2z" fill="#bbb" stroke="#eee" /><path d="M3 4c0-4 6-4 6 0M3 7h6M4 10h4" stroke="#222" fill="none" /><path d="M4 2l4 2" stroke="#fff" /></svg>
        <i />
        <svg width="16" height="14" viewBox="0 0 16 14"><path d="M1 1h11v11H1z" fill="#fff" stroke="#1a1a90" /><path d="M0 0h13v3H0z" fill="#1a1a90" /><path d="M6 7h4v3H6zM11 6h4v3h-4zM11 10h4v3h-4zM6 11h4v2H6z" fill="#ddd" stroke="#222" strokeWidth=".7" /></svg>
      </StackTools>
    </Controls>
    <Rule />
    <RollArea>
      <Rolls>
        <Rollout title="Selection" sign="-" />
        <RollBody $h={224}>
          <Line $h={16} $top={0} $gap={10} $left={16}>
            <svg width="15" height="14" viewBox="0 0 15 14"><path d="M0 8h2v2H0zM4 5h1v2H4zM8 12h2v2H8zM7 6h2v2H7zM13 2h2v2h-2zM9 2h1v2H9z" fill="#c8202a" /></svg>
            <svg width="15" height="14" viewBox="0 0 16 14"><path d="M1 9l13-7-5 10zM12 1h3v3M1 9l3 2" fill="none" stroke="#c8202a" strokeWidth="1.500" /></svg>
            <svg width="13" height="15" viewBox="0 0 13 15"><path d="M3 1h5l4 5v5l-4 3H4l-2-3 2-4-3-3z" fill="none" stroke="#c8202a" strokeWidth="1.500" /></svg>
            <svg width="13" height="13" viewBox="0 0 13 13"><path d="M.5.500h12v12H.5z" fill="#fb0000" stroke="#111" /></svg>
            <svg width="14" height="13" viewBox="0 0 14 13"><path d="M1 5l4-4h8v6l-4 5H1z" fill="#fb0000" stroke="#111" /><path d="M9 5l4-4v6l-4 5z" fill="#6a1090" stroke="#111" /><path d="M1 5h8" stroke="#111" /></svg>
          </Line>
          <Line $h={20} $top={7} $left={3}><Check $off><input type="checkbox" disabled />By Vertex</Check></Line>
          <Line $h={20} $top={0} $left={3}><Check $off><input type="checkbox" disabled />Ignore Backfacing</Check></Line>
          <Line $h={20} $top={0} $left={3} $gap={2}>
            <Check $off><input type="checkbox" disabled />By Angle:</Check>
            <Spacer />
            <AngleInput aria-label="Angle" defaultValue="45.0" />
            <Spin aria-label="Angle spinner"><SpinArrows /></Spin>
          </Line>
          <Line $top={1} $left={2}><Btn disabled>Shrink</Btn><Btn disabled>Grow</Btn></Line>
          <Line $top={4} $left={2}>
            <Pair><Btn disabled>Ring</Btn><Spin aria-label="Ring spinner"><SpinArrows /></Spin></Pair>
            <Pair><Btn disabled>Loop</Btn><Spin aria-label="Loop spinner"><SpinArrows /></Spin></Pair>
          </Line>
          <Group $h={39}>
            <legend>Preview Selection</legend>
            <Previews>
              <Radio><input type="radio" name="preview" defaultChecked />Off</Radio>
              <Radio $off><input type="radio" name="preview" />SubObj</Radio>
              <Radio $off><input type="radio" name="preview" />Multi</Radio>
            </Previews>
          </Group>
          <Note>Whole Object Selected</Note>
        </RollBody>
        <Rollout title="Soft Selection" sign="+" />
        <RollStub />
        <Rollout title="Edit Geometry" sign="-" />
        <RollBody>
          <Line $top={0}><Btn>Repeat Last</Btn></Line>
          <Constraints $h={55}>
            <legend>Constraints</legend>
            <Radio><input type="radio" name="con" defaultChecked />None</Radio>
            <Radio><input type="radio" name="con" />Edge</Radio>
            <Radio><input type="radio" name="con" />Face</Radio>
            <Radio><input type="radio" name="con" />Normal</Radio>
          </Constraints>
          <Line $top={7} $left={11} $gap={9}>
            <Check><input type="checkbox" />Preserve UVs</Check>
            <Square aria-label="Preserve settings"><WindowGlyph /></Square>
          </Line>
          <Line $top={4}><Btn>Create</Btn><Btn disabled>Collapse</Btn></Line>
          <Line><Pair><Btn>Attach</Btn><Square aria-label="Attach list"><WindowGlyph /></Square></Pair><Btn disabled>Detach</Btn></Line>
          <Box>
            <Line><Btn disabled>Slice Plane</Btn><Pair><Check><input type="checkbox" />Split</Check></Pair></Line>
            <Line $top={4}><Btn disabled>Slice</Btn><Btn disabled>Reset Plane</Btn></Line>
            <Line><Btn>QuickSlice</Btn><Btn>Cut</Btn></Line>
          </Box>
          <Line>
            <Pair><Btn>MSmooth</Btn><Square aria-label="MSmooth settings"><WindowGlyph /></Square></Pair>
            <Pair><Btn>Tessellate</Btn><Square aria-label="Tessellate settings"><WindowGlyph /></Square></Pair>
          </Line>
          <Line $gap={4}><Btn>Make Planar</Btn><Btn $w={17}>X</Btn><Btn $w={17}>Y</Btn><Btn $w={17}>Z</Btn></Line>
          <Line $top={4}><Btn>View Align</Btn><Btn>Grid Align</Btn></Line>
          <Line $center><Pair $w={72}><Btn>Relax</Btn><Square aria-label="Relax settings"><WindowGlyph /></Square></Pair></Line>
          <Line><Btn disabled>Hide Selected</Btn><Btn disabled>Unhide All</Btn></Line>
          <Line $center><Btn disabled $w={92}>Hide Unselected</Btn></Line>
          <Line $h={14} $top={3} $left={2}><Dim>Named Selections:</Dim></Line>
          <Line $top={2}><Btn disabled>Copy</Btn><Btn disabled>Paste</Btn></Line>
          <Line $h={14} $top={4} $left={3}><Check $off><input type="checkbox" defaultChecked disabled />Delete Isolated Vertices</Check></Line>
          <Line $h={14} $top={7} $left={27}><Check><input type="checkbox" defaultChecked />Full Interactivity</Check></Line>
        </RollBody>
        <Rollout title="Subdivision Surface" sign="-" />
        <RollBody />
      </Rolls>
      <Rail />
    </RollArea>
  </Panel>
);

export default function App() {
  return (
    <Frame>
      <Global />
      <Inner>
        <Top>
          <AppButton aria-label="Application menu"><MaxLogo /><Tri s={7} c="#333" /></AppButton>
          <Bars>
            <TitleBar>
              <QuickBar>
                <QuickButton aria-label="New"><Doc /></QuickButton>
                <QuickButton aria-label="Open"><Folder /></QuickButton>
                <QuickButton aria-label="Save"><Save /></QuickButton>
                <QuickButton aria-label="Undo"><Undo /></QuickButton>
                <QuickButton $w={12} aria-label="Undo list"><Tri s={5} c="#333" /></QuickButton>
                <QuickButton aria-label="Redo"><Undo flip /></QuickButton>
                <QuickButton $w={12} aria-label="Redo list"><Tri s={5} c="#333" /></QuickButton>
                <QuickButton aria-label="Project folder"><Project /></QuickButton>
                <SelectWrap>
                  <WorkspaceSelect aria-label="Workspace"><option>Workspace: Default</option></WorkspaceSelect>
                  <SelectArrow $right={5}><Tri s={5} c="#333" /></SelectArrow>
                </SelectWrap>
                <QuickButton $w={17} aria-label="Customize toolbar">
                  <svg width="8" height="8" viewBox="0 0 8 8"><path d="M0 0h8v2H0zM0 3h8L4 8z" fill="#111" /></svg>
                </QuickButton>
              </QuickBar>
              <TitleText><span>{"Autodesk 3ds Max  2014 x64"}</span><span>Interior_Exhibition_Hall_max_vray.max</span></TitleText>
              <TitleRight>
                <SearchBar>
                  <QuickButton $w={13} aria-label="Toggle search"><svg width="5" height="8" viewBox="0 0 5 8"><path d="M0 0l5 4-5 4z" fill="#111" /></svg></QuickButton>
                  <SearchInput aria-label="Search" placeholder="Type a keyword or phrase" />
                  <QuickButton aria-label="Search"><Binoculars /></QuickButton>
                  <QuickButton aria-label="Key"><Key /></QuickButton>
                  <QuickButton aria-label="Communication"><Dish /></QuickButton>
                  <QuickButton aria-label="Favorites"><Star /></QuickButton>
                  <QuickButton $w={12} as="span" />
                  <QuickButton $w={22} aria-label="Help"><Help /></QuickButton>
                  <QuickButton $w={12} aria-label="Help list"><Tri s={5} c="#333" /></QuickButton>
                </SearchBar>
                <Spacer style={{ width: 27 }} />
                <WinButtons $w={46}>
                  <button aria-label="Minimize"><Min /></button>
                  <button aria-label="Maximize"><Max /></button>
                  <button aria-label="Close"><Close /></button>
                </WinButtons>
              </TitleRight>
            </TitleBar>
            <MenuBar>{menus.map((m) => <button key={m}>{m}</button>)}</MenuBar>
          </Bars>
        </Top>
        <Workspace>
          <Viewport>
            <SceneDrawing />
            <ViewLabels>{"[+] [Perspective ] [Wireframe ]"}</ViewLabels>
            <Stats>
              <tbody>
                <tr><th /><th>Total</th></tr>
                {stats.map(([k, v]) => <tr key={k}><th>{k}</th><td>{v}</td></tr>)}
              </tbody>
            </Stats>
            <LayerDialog />
            <AssetDialog />
          </Viewport>
          <CommandPanel />
        </Workspace>
      </Inner>
    </Frame>
  );
}
